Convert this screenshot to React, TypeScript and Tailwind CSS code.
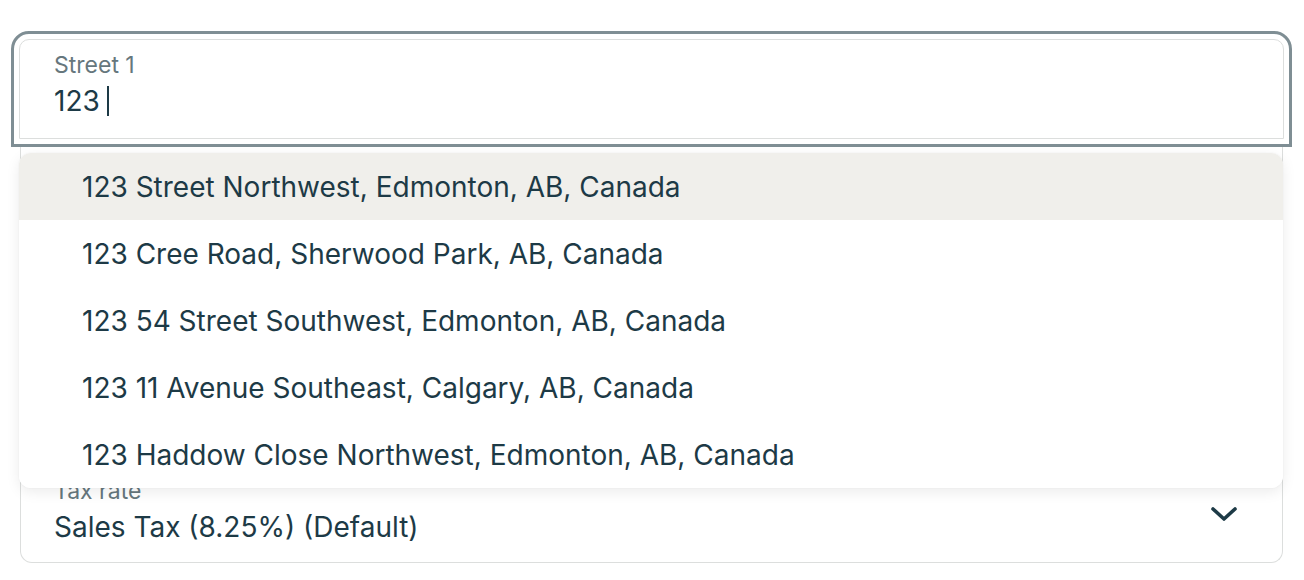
const suggestions = [
  "123 Street Northwest, Edmonton, AB, Canada",
  "123 Cree Road, Sherwood Park, AB, Canada",
  "123 54 Street Southwest, Edmonton, AB, Canada",
  "123 11 Avenue Southeast, Calgary, AB, Canada",
  "123 Haddow Close Northwest, Edmonton, AB, Canada",
];

export default function App() {
  return (
    <div
      className="relative h-[580px] w-full bg-white pl-[19px] pr-[20px] pt-[39px] text-[#1d3a46]"
      style={{ fontFamily: "Inter, 'Noto Sans', sans-serif" }}
    >
      {/* Street 1 input (focused) */}
      <div className="flex h-[100px] flex-col rounded-t-[10px] border border-[#dcdedd] px-[34px] pt-[11px] outline-[3px] outline-offset-[5px] outline-[#7f8e94] outline-solid">
        <label className="text-[23px] leading-[28px] text-[#66777d]">Street 1</label>
        <div className="mt-[5px] flex items-center text-[28px] leading-[34px]">
          <span>123</span>
          <span className="ml-[7px] h-[30px] w-[2px] bg-[#1d3a46]" />
        </div>
      </div>

      {/* Fields below, mostly covered by the suggestions menu */}
      <div className="mx-[1px] mt-[7px] flex h-[417px] flex-col justify-end rounded-b-[12px] border-x border-b border-[#dcdedd]">
        <div className="flex items-center justify-between pb-[18px] pl-[33px] pr-[44px]">
          <div className="flex flex-col">
            <span className="text-[23px] leading-[28px] text-[#66777d]">Tax rate</span>
            <span className="mt-[5px] text-[28px] leading-[34px]">Sales Tax (8.25%) (Default)</span>
          </div>
          <svg width="28" height="16" viewBox="0 0 28 16" fill="none" className="mt-[6px]">
            <path d="M3 3L14 13L25 3" stroke="#1d3a46" strokeWidth="3.6" strokeLinecap="round" strokeLinejoin="round" />
          </svg>
        </div>
      </div>

      {/* Address suggestions */}
      <ul className="absolute left-[19px] top-[153px] w-[1264px] overflow-hidden rounded-[12px] bg-white shadow-[0_4px_14px_rgba(0,0,0,0.08),0_0_2px_rgba(0,0,0,0.06)]">
        {suggestions.map((s, i) => (
          <li
            key={s}
            className={`flex h-[67px] items-center pl-[63px] text-[28px] ${i === 0 ? "bg-[#f0efeb]" : "bg-white"}`}
          >
            {s}
          </li>
        ))}
      </ul>
    </div>
  );
}
